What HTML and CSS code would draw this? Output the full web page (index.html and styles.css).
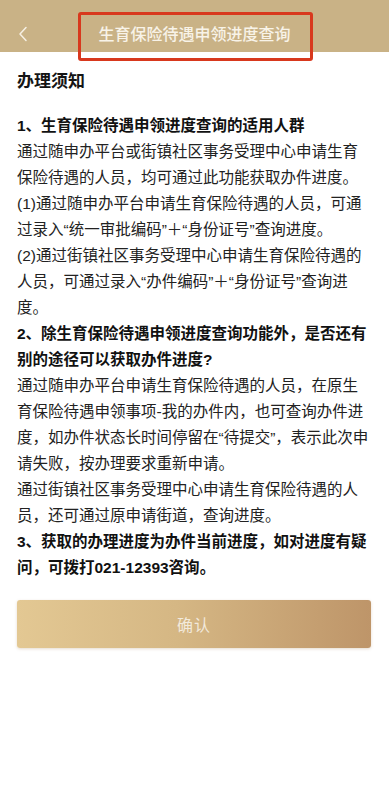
FILE: index.html
```html
<!DOCTYPE html>
<html lang="zh-CN">
<head>
<meta charset="utf-8">
<meta name="viewport" content="width=device-width, initial-scale=1">
<title>生育保险待遇申领进度查询</title>
<link rel="stylesheet" href="styles.css">
</head>
<body>
<div class="page">
  <header class="navbar">
    <button class="back" aria-label="返回">
      <svg width="10" height="16" viewBox="0 0 10 16"><path d="M8 1.5 L2 8 L8 14.5" fill="none" stroke="#f6f0e4" stroke-width="1.5" stroke-linecap="round" stroke-linejoin="round"/></svg>
    </button>
    <h1 class="nav-title">生育保险待遇申领进度查询</h1>
    <span class="highlight"></span>
  </header>

  <main class="content">
    <h2 class="section-title">办理须知</h2>
    <div class="notes">
      <p class="q">1、生育保险待遇申领进度查询的适用人群</p>
      <p>通过随申办平台或街镇社区事务受理中心申请生育保险待遇的人员，均可通过此功能获取办件进度。</p>
      <p>(1)通过随申办平台申请生育保险待遇的人员，可通过录入“统一审批编码”＋“身份证号”查询进度。</p>
      <p>(2)通过街镇社区事务受理中心申请生育保险待遇的人员，可通过录入“办件编码”＋“身份证号”查询进度。</p>
      <p class="q">2、除生育保险待遇申领进度查询功能外，是否还有别的途径可以获取办件进度?</p>
      <p>通过随申办平台申请生育保险待遇的人员，在原生育保险待遇申领事项-我的办件内，也可查询办件进度，如办件状态长时间停留在“待提交”，表示此次申请失败，按办理要求重新申请。</p>
      <p>通过街镇社区事务受理中心申请生育保险待遇的人员，还可通过原申请街道，查询进度。</p>
      <p class="q">3、获取的办理进度为办件当前进度，如对进度有疑问，可拨打021-12393咨询。</p>
    </div>
    <button class="confirm">确认</button>
  </main>
</div>
</body>
</html>
```

FILE: styles.css
```css
* {
  box-sizing: border-box;
}

html, body {
  margin: 0;
  padding: 0;
  background: #ffffff;
}

body {
  font-family: "Liberation Sans", "Noto Sans CJK SC", sans-serif;
  color: #1b1b1b;
}

.page {
  width: 389px;
  min-height: 794px;
  background: #ffffff;
}

.navbar {
  position: relative;
  height: 52px;
  background: #c9b286;
  display: flex;
  align-items: center;
  justify-content: center;
}

.back {
  position: absolute;
  left: 16px;
  top: 25px;
  width: 14px;
  height: 18px;
  padding: 0;
  border: 0;
  background: transparent;
  display: flex;
  align-items: center;
  justify-content: center;
}

.nav-title {
  margin: 0;
  padding-top: 14px;
  font-size: 16px;
  font-weight: 500;
  color: #f8f3e8;
  letter-spacing: 0;
}

.highlight {
  position: absolute;
  left: 78px;
  top: 12px;
  width: 235px;
  height: 49px;
  border: 3px solid #d8381d;
  border-radius: 3px;
  pointer-events: none;
}

.content {
  padding: 17px 19px 0 17px;
}

.section-title {
  margin: 0 0 18px;
  font-size: 17px;
  line-height: 26px;
  font-weight: 700;
  color: #151515;
}

.notes p {
  margin: 0;
  font-size: 15.5px;
  line-height: 26px;
  color: #222222;
}

.notes p.q {
  font-weight: 700;
  color: #111111;
}

.confirm {
  display: block;
  width: 354px;
  height: 48px;
  margin: 19px 0 0;
  border: 0;
  border-radius: 3px;
  background: linear-gradient(90deg, #e3c893 0%, #d5b784 45%, #be9569 100%);
  box-shadow: 0 1px 3px rgba(150, 110, 60, 0.25);
  color: rgba(255, 255, 255, 0.72);
  font-family: "Liberation Sans", "Noto Sans CJK SC", sans-serif;
  font-size: 16px;
  letter-spacing: 1px;
}
```
